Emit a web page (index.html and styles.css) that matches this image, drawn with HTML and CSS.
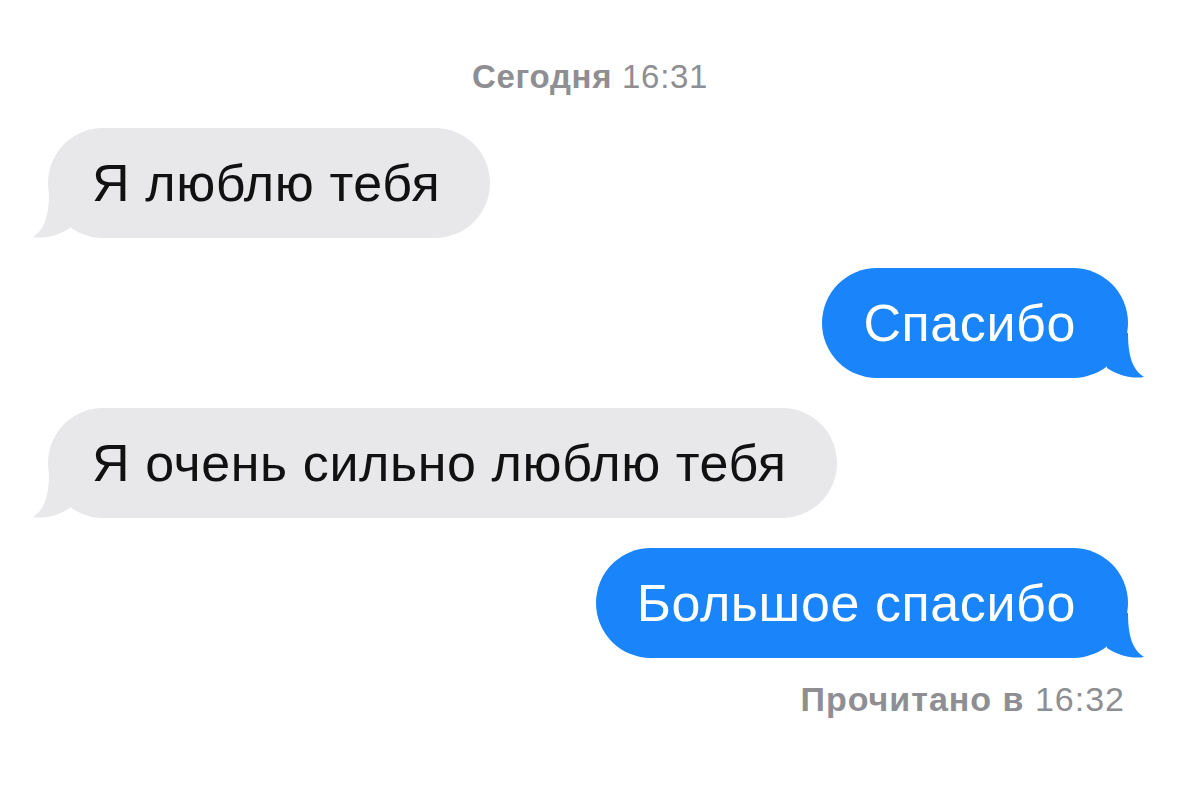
FILE: index.html
```html
<!DOCTYPE html>
<html lang="ru">
<head>
<meta charset="utf-8">
<title>Сообщения</title>
<link rel="stylesheet" href="styles.css">
</head>
<body>
<main class="chat">
  <div class="stamp"><b>Сегодня</b> 16:31</div>

  <div class="row in">
    <div class="bubble gray">
      Я люблю тебя
      <svg class="tail" viewBox="0 0 40 45" width="40" height="45"><path d="M19 0 C19 24 14 37 3 44 C14 46 28 43 40 35 L40 0 Z"/></svg>
    </div>
  </div>

  <div class="row out">
    <div class="bubble blue">
      Спасибо
      <svg class="tail" viewBox="0 0 40 45" width="40" height="45"><path d="M21 0 C21 24 26 37 37 44 C26 46 12 43 0 35 L0 0 Z"/></svg>
    </div>
  </div>

  <div class="row in">
    <div class="bubble gray">
      Я очень сильно люблю тебя
      <svg class="tail" viewBox="0 0 40 45" width="40" height="45"><path d="M19 0 C19 24 14 37 3 44 C14 46 28 43 40 35 L40 0 Z"/></svg>
    </div>
  </div>

  <div class="row out">
    <div class="bubble blue">
      Большое спасибо
      <svg class="tail" viewBox="0 0 40 45" width="40" height="45"><path d="M21 0 C21 24 26 37 37 44 C26 46 12 43 0 35 L0 0 Z"/></svg>
    </div>
  </div>

  <div class="receipt"><b>Прочитано в</b> 16:32</div>
</main>
</body>
</html>
```
FILE: styles.css
```css
html, body {
  margin: 0;
  padding: 0;
  background: #ffffff;
}
body {
  font-family: "Liberation Sans", Arial, "Noto Sans", sans-serif;
  width: 1179px;
  height: 788px;
  overflow: hidden;
}
.chat {
  display: flex;
  flex-direction: column;
  padding: 58px 51px 0 48px;
}
.stamp {
  text-align: center;
  font-size: 33px;
  line-height: 38px;
  letter-spacing: 0.7px;
  color: #8e8e93;
  margin: 0 0 32px 4px;
}
.stamp b, .receipt b {
  font-weight: 700;
}
.row {
  display: flex;
  margin-bottom: 30px;
}
.row.in { justify-content: flex-start; }
.row.out { justify-content: flex-end; }
.bubble {
  position: relative;
  height: 110px;
  box-sizing: border-box;
  border-radius: 55px;
  font-size: 52px;
  line-height: 110px;
  letter-spacing: 0.6px;
  white-space: nowrap;
}
.bubble.gray {
  background: #e8e8ea;
  color: #111111;
  padding: 0 50px 0 44px;
}
.bubble.blue {
  background: #1a84fb;
  color: #ffffff;
  padding: 0 52px 0 41px;
}
.tail {
  position: absolute;
  bottom: 0;
}
.gray .tail {
  left: -18px;
  fill: #e8e8ea;
}
.blue .tail {
  right: -19px;
  fill: #1a84fb;
}
.receipt {
  align-self: flex-end;
  font-size: 34px;
  line-height: 38px;
  letter-spacing: 1px;
  color: #8e8e93;
  margin-top: -8px;
  margin-right: 3px;
}
```
